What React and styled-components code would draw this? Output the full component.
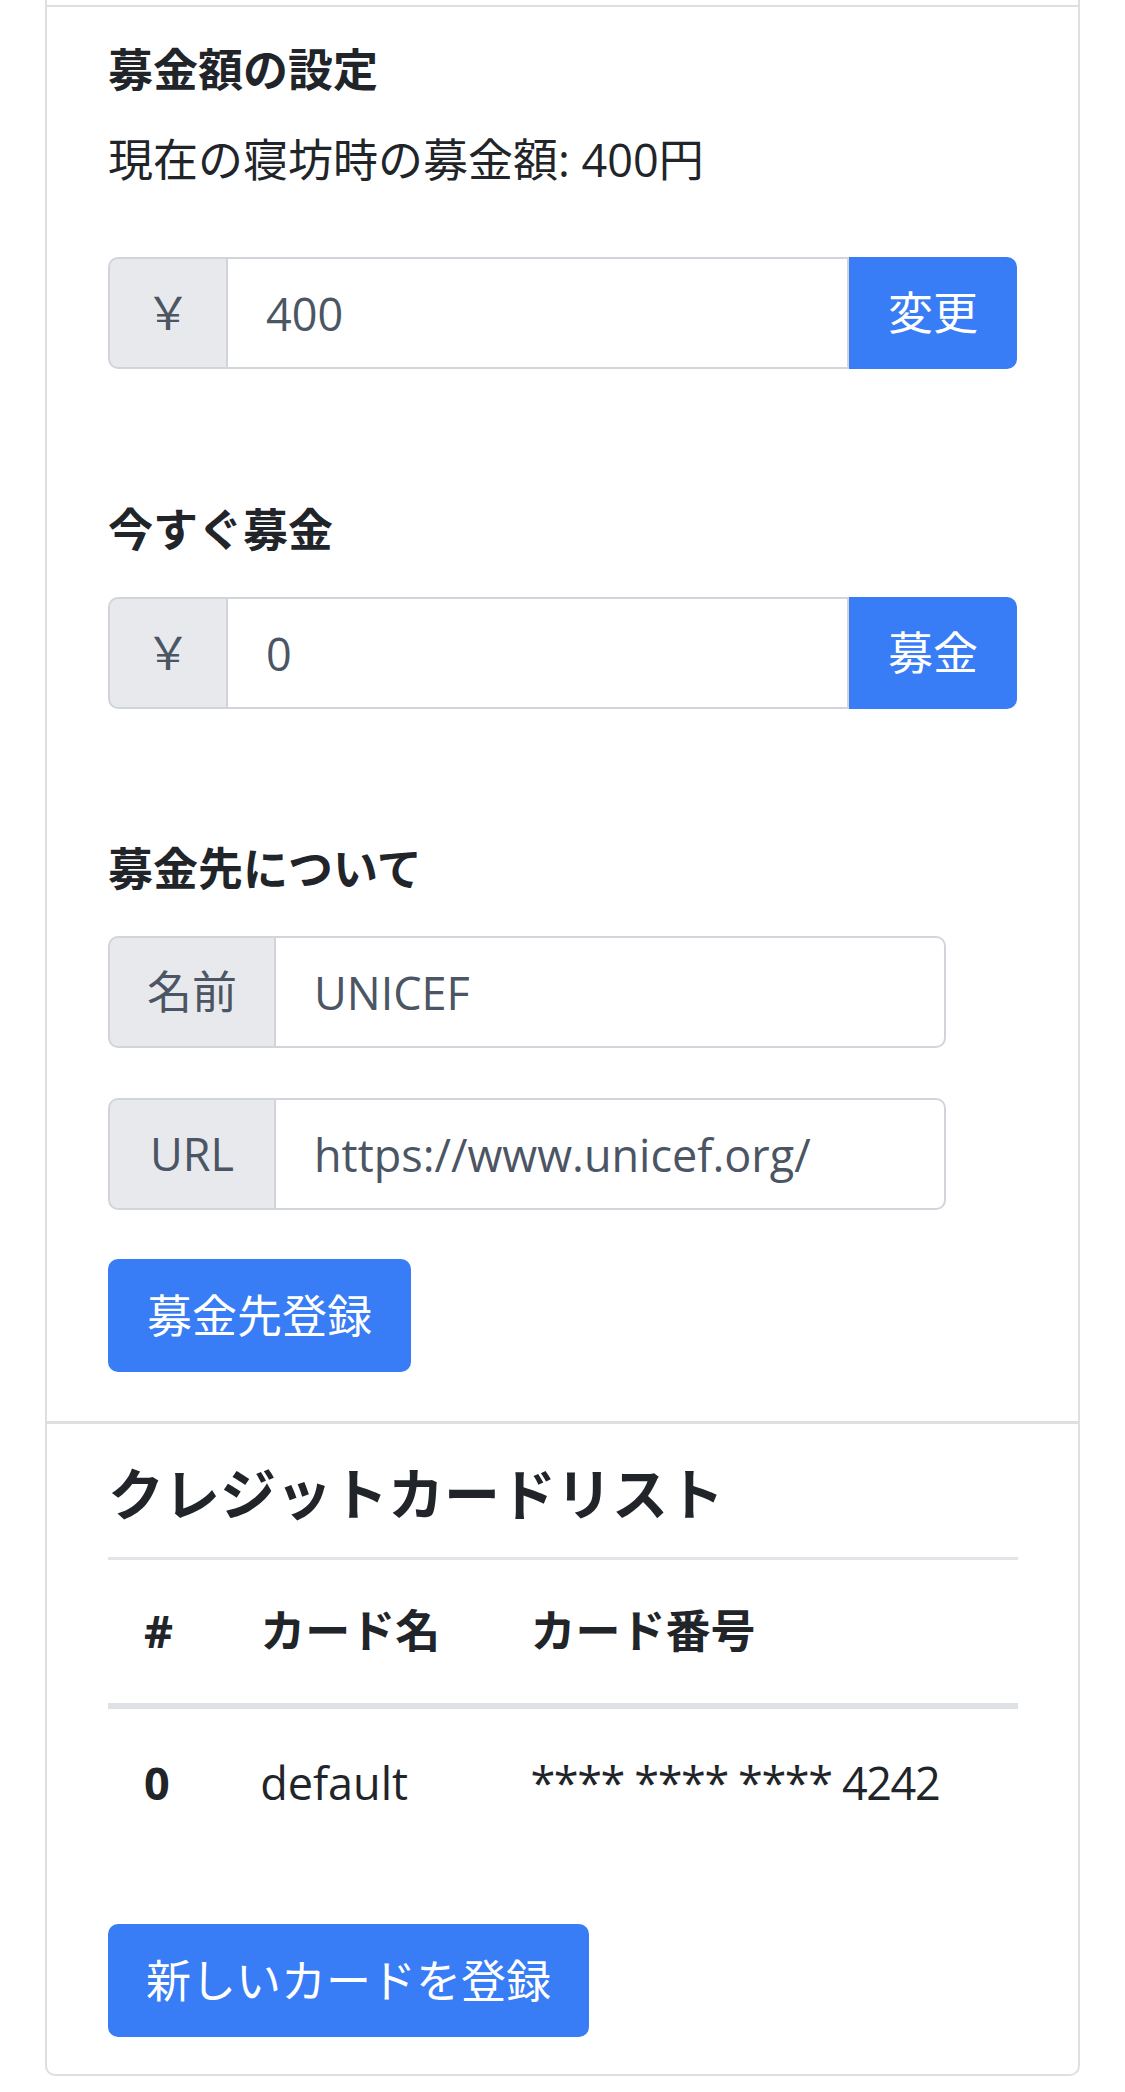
import React from "react";
import styled, { createGlobalStyle } from "styled-components";

const Global = createGlobalStyle`
  html, body { margin: 0; padding: 0; background: #ffffff; }
  body {
    font-family: "Open Sans", "Noto Sans CJK JP", sans-serif;
    color: #212529;
    font-size: 45px;
    line-height: 1.5;
  }
  * { box-sizing: border-box; }
`;

const Page = styled.div`
  padding: 0 45px 16px 45px;
`;

const Card = styled.div`
  border: 2px solid #dfdfdf;
  border-top: none;
  border-radius: 0 0 10px 10px;
  padding-top: 5px;
  background: #fff;
`;

const Section = styled.section`
  border-top: ${(p) => p.$line}px solid #dfdfdf;
  padding: ${(p) => p.$pt}px 60px ${(p) => p.$pb}px 61px;
  display: flex;
  flex-direction: column;
  align-items: flex-start;
`;

const Label = styled.div`
  font-weight: 700;
  font-size: 45px;
  line-height: 67.5px;
  margin-top: ${(p) => p.$mt || 0}px;
  margin-bottom: ${(p) => p.$mb}px;
`;

const Text = styled.p`
  margin: 0 0 63.5px 0;
  font-size: 45px;
  line-height: 67.5px;
`;

const InputGroup = styled.div`
  display: flex;
  align-items: stretch;
  width: ${(p) => p.$w}px;
  height: 112px;
  margin-bottom: ${(p) => p.$mb || 0}px;
`;

const Addon = styled.span`
  display: flex;
  align-items: center;
  justify-content: center;
  flex: 0 0 ${(p) => p.$w}px;
  background: #e8e9ed;
  color: #4b5563;
  border: 2px solid #d1d5db;
  border-radius: 10px 0 0 10px;
  font-size: 45px;
`;

const Input = styled.input`
  flex: 1 1 auto;
  min-width: 0;
  border: 2px solid #d1d5db;
  border-left: none;
  border-radius: ${(p) => (p.$end ? "0 10px 10px 0" : "0")};
  padding: 0 0 0 38px;
  font-family: "Open Sans", "Noto Sans CJK JP", sans-serif;
  font-size: 45px;
  color: #4b5563;
  background: #fff;
  outline: none;
`;

const Button = styled.button`
  background: #387cf6;
  color: #ffffff;
  border: none;
  font-family: "Open Sans", "Noto Sans CJK JP", sans-serif;
  font-size: 45px;
  line-height: 67.5px;
  white-space: nowrap;
  text-align: center;
  cursor: pointer;
  border-radius: ${(p) => (p.$attached ? "0 10px 10px 0" : "10px")};
  padding: ${(p) => (p.$attached ? "0" : "22.5px 0")};
  width: ${(p) => p.$w}px;
  flex: ${(p) => (p.$attached ? `0 0 ${p.$w}px` : "none")};
  margin-top: ${(p) => p.$mt || 0}px;
`;

const Heading = styled.h4`
  margin: 0 0 30px 0;
  font-size: 56px;
  font-weight: 700;
  line-height: 1.2;
`;

const Rule = styled.hr`
  width: 100%;
  margin: 0;
  border: none;
  border-top: 3px solid #e1e4e8;
`;

const Table = styled.table`
  width: 100%;
  border-collapse: separate;
  border-spacing: 0;
  table-layout: fixed;
`;

const Cell = styled.td`
  padding: ${(p) => (p.$head ? "37.75px 0" : "40.25px 0")};
  padding-left: 36px;
  border-bottom: ${(p) => (p.$head ? "6px solid #dee2e6" : "none")};
  vertical-align: middle;
  font-size: 45px;
  line-height: 67.5px;
  font-weight: ${(p) => (p.$bold ? 700 : 400)};
  letter-spacing: ${(p) => (p.$tight ? "-1.4px" : "normal")};
  text-align: left;
  white-space: nowrap;
`;

const Col = styled.col`
  width: ${(p) => p.$w}px;
`;

export default function App() {
  return (
    <>
      <Global />
      <Page>
        <Card>
          <Section $line={2} $pt={29} $pb={49}>
            <Label $mb={22.5}>募金額の設定</Label>
            <Text>現在の寝坊時の募金額: 400円</Text>
            <InputGroup $w={909}>
              <Addon $w={120}>￥</Addon>
              <Input type="number" defaultValue="400" />
              <Button $attached $w={168}>変更</Button>
            </InputGroup>

            <Label $mt={127} $mb={33.5}>今すぐ募金</Label>
            <InputGroup $w={909}>
              <Addon $w={120}>￥</Addon>
              <Input type="number" defaultValue="0" />
              <Button $attached $w={168}>募金</Button>
            </InputGroup>

            <Label $mt={126} $mb={33.5}>募金先について</Label>
            <InputGroup $w={838} $mb={50}>
              <Addon $w={168}>名前</Addon>
              <Input $end type="text" defaultValue="UNICEF" />
            </InputGroup>
            <InputGroup $w={838} $mb={49}>
              <Addon $w={168}>URL</Addon>
              <Input $end type="text" defaultValue="https://www.unicef.org/" />
            </InputGroup>
            <Button $w={303}>募金先登録</Button>
          </Section>

          <Section $line={3} $pt={36} $pb={37}>
            <Heading>クレジットカードリスト</Heading>
            <Rule />
            <Table>
              <colgroup>
                <Col $w={116} />
                <Col $w={270} />
                <Col $w={523} />
              </colgroup>
              <thead>
                <tr>
                  <Cell as="th" $head $bold>#</Cell>
                  <Cell as="th" $head $bold>カード名</Cell>
                  <Cell as="th" $head $bold>カード番号</Cell>
                </tr>
              </thead>
              <tbody>
                <tr>
                  <Cell as="th" $bold>0</Cell>
                  <Cell>default</Cell>
                  <Cell $tight>**** **** **** 4242</Cell>
                </tr>
              </tbody>
            </Table>
            <Button $mt={67.5} $w={481}>新しいカードを登録</Button>
          </Section>
        </Card>
      </Page>
    </>
  );
}
